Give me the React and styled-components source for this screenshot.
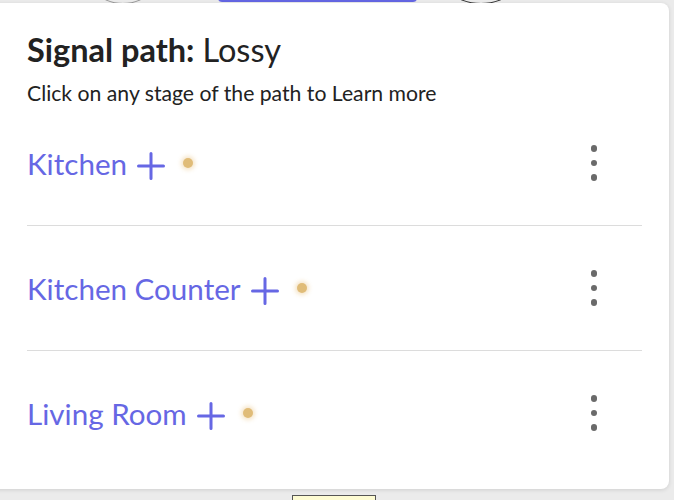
import styled, { createGlobalStyle } from "styled-components";

const Global = createGlobalStyle`
  html, body {
    margin: 0;
    padding: 0;
    background: #ebebeb;
    font-family: Lato, "Noto Sans", sans-serif;
    overflow: hidden;
  }
`;

const Screen = styled.div`
  position: relative;
  width: 674px;
  height: 500px;
  overflow: hidden;
  background: #ebebeb;
`;

// bits of the page peeking out from behind the modal
const TopTab = styled.div`
  position: absolute;
  top: -4px;
  left: 218px;
  width: 199px;
  height: 6px;
  border-radius: 0 0 4px 4px;
  background: #6466e3;
`;

const TopRing = styled.div`
  position: absolute;
  top: -18px;
  left: ${(p) => p.$left}px;
  width: ${(p) => p.$size}px;
  height: 20px;
  border-radius: 50%;
  border: 1.5px solid ${(p) => p.$color};
`;

const BottomNote = styled.div`
  position: absolute;
  top: 495px;
  left: 292px;
  width: 82px;
  height: 12px;
  background: #fdfbd2;
  border: 1px solid #555;
`;

const Modal = styled.div`
  position: absolute;
  top: 3px;
  left: -10px;
  width: 679px;
  height: 486px;
  box-sizing: border-box;
  padding: 27px 27px 0 37px;
  background: #fff;
  border-radius: 8px;
  box-shadow: 0 1px 4px rgba(0, 0, 0, 0.12);
  display: flex;
  flex-direction: column;
`;

const Title = styled.h2`
  margin: 0;
  font-size: 32.5px;
  font-weight: 700;
  color: #222;
  line-height: 40px;
  span {
    font-weight: 400;
  }
`;

const Subtitle = styled.p`
  margin: 10px 0 0;
  font-size: 21.2px;
  color: #222;
  line-height: 26px;
`;

const List = styled.div`
  display: flex;
  flex-direction: column;
`;

const Row = styled.div`
  display: flex;
  align-items: center;
  height: ${(p) => (p.$first ? "114px" : "124px")};
  padding-bottom: ${(p) => (p.$first ? "5px" : "0")};
  border-top: ${(p) => (p.$first ? "none" : "1.5px solid #dcdcdc")};
`;

const Stage = styled.div`
  display: flex;
  align-items: center;
  flex: 1;
  color: #6667e4;
  font-size: 29.6px;
  cursor: pointer;
`;

const PlusIcon = styled.svg`
  margin-left: 10px;
  margin-top: 6px;
  width: 28px;
  height: 28px;
`;

const Dot = styled.span`
  margin-left: 18px;
  width: 10px;
  height: 10px;
  border-radius: 50%;
  background: #e0bc78;
  box-shadow: 0 0 4px 2px rgba(232, 196, 130, 0.45);
`;

const Kebab = styled.button`
  display: flex;
  flex-direction: column;
  align-items: center;
  gap: 8px;
  margin-right: 45px;
  padding: 0;
  border: none;
  background: none;
  cursor: pointer;
  i {
    width: 6.5px;
    height: 6.5px;
    border-radius: 50%;
    background: #6a6a6a;
  }
`;

const stages = ["Kitchen", "Kitchen Counter", "Living Room"];

const App = () => {
  return (
    <Screen>
      <Global />
      <TopRing $left={100} $size={44} $color="#999" />
      <TopRing $left={455} $size={50} $color="#333" />
      <TopTab />
      <Modal>
        <Title>
          Signal path: <span>Lossy</span>
        </Title>
        <Subtitle>Click on any stage of the path to Learn more</Subtitle>
        <List>
          {stages.map((s, i) => (
            <Row key={s} $first={i === 0}>
              <Stage>
                {s}
                <PlusIcon viewBox="0 0 28 28">
                  <path
                    d="M14 1.5v25M1.5 14h25"
                    stroke="#6667e4"
                    strokeWidth="3"
                    strokeLinecap="round"
                    fill="none"
                  />
                </PlusIcon>
                <Dot />
              </Stage>
              <Kebab>
                <i />
                <i />
                <i />
              </Kebab>
            </Row>
          ))}
        </List>
      </Modal>
      <BottomNote />
    </Screen>
  );
};

export default App;
